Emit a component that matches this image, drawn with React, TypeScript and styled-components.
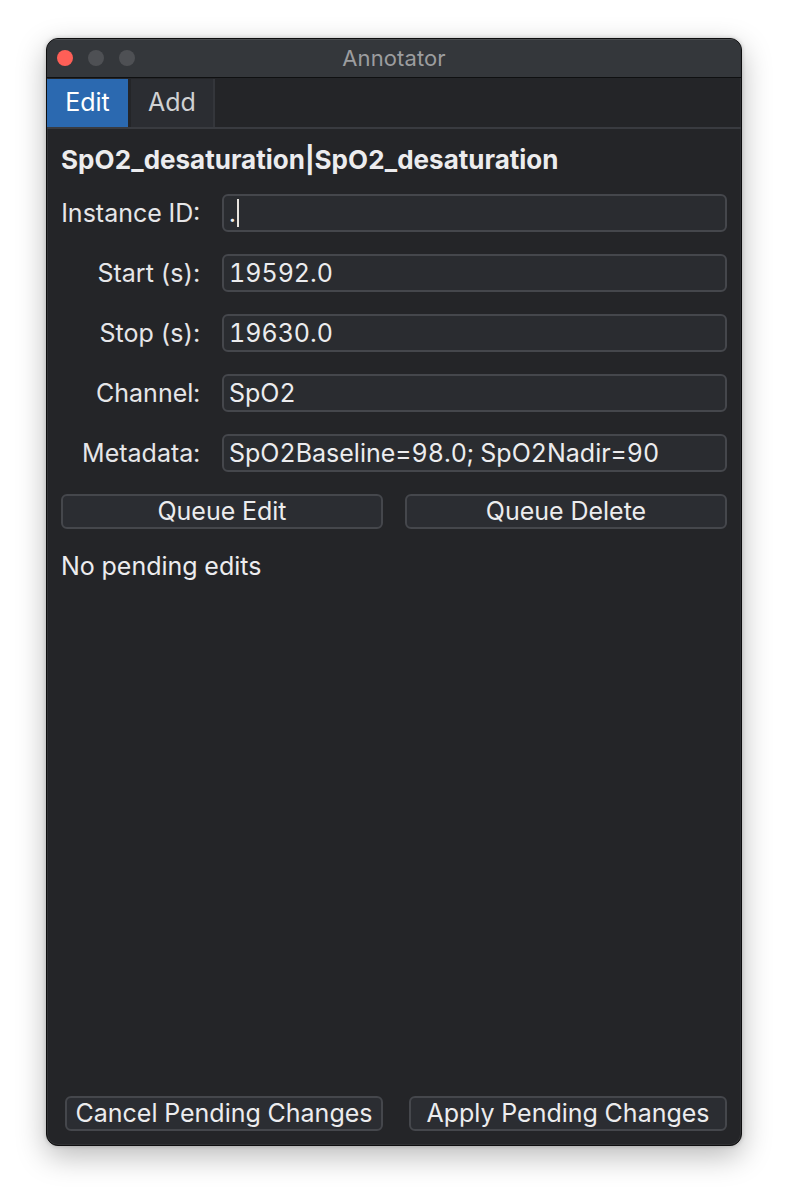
import React from "react";
import styled, { createGlobalStyle } from "styled-components";

const Global = createGlobalStyle`
  html, body { margin: 0; padding: 0; background: #ffffff; }
  body { font-family: Inter, "Noto Sans", "Liberation Sans", sans-serif; }
  * { box-sizing: border-box; }
`;

const Desk = styled.div`
  width: 788px;
  height: 1200px;
  padding: 38px 0 0 46px;
  background: #ffffff;
`;

const Window = styled.div`
  width: 696px;
  height: 1108px;
  border-radius: 12px;
  background: #242528;
  border: 1px solid #0e0e0f;
  box-shadow: 0 0 0 1px rgba(255,255,255,0.06) inset, 0 10px 30px rgba(0,0,0,0.28), 0 0 4px rgba(0,0,0,0.2);
  display: flex;
  flex-direction: column;
  overflow: hidden;
`;

const TitleBar = styled.div`
  position: relative;
  height: 39px;
  flex: none;
  background: #34373b;
  border-bottom: 1px solid #0f1011;
  box-shadow: inset 0 1px 0 rgba(255,255,255,0.12);
  display: flex;
  align-items: center;
  justify-content: center;
`;

const Lights = styled.div`
  position: absolute;
  left: 10px;
  top: 11px;
  display: flex;
  gap: 15px;
`;

const Light = styled.span<{ $c: string }>`
  width: 16px;
  height: 16px;
  border-radius: 50%;
  background: ${(p) => p.$c};
`;

const Title = styled.div`
  color: #9c9d9f;
  font-size: 22px;
  letter-spacing: 0.1px;
`;

const TabBar = styled.div`
  height: 51px;
  flex: none;
  display: flex;
  align-items: stretch;
  border-bottom: 2px solid #393b40;
  padding-top: 1px;
`;

const Tab = styled.div<{ $active?: boolean }>`
  width: ${(p) => (p.$active ? "81px" : "84px")};
  margin-left: ${(p) => (p.$active ? "0" : "3px")};
  background: ${(p) => (p.$active ? "#2b69b0" : "#2b2d32")};
  border-right: ${(p) => (p.$active ? "none" : "2px solid #34363b")};
  color: ${(p) => (p.$active ? "#ffffff" : "#d0d1d3")};
  font-size: 25px;
  display: flex;
  align-items: center;
  justify-content: center;
  padding-bottom: 2px;
`;

const Body = styled.div`
  flex: 1;
  display: flex;
  flex-direction: column;
  padding: 16px 14px 14px 14px;
  color: #e8e8ea;
  font-variant-numeric: tabular-nums;
`;

const Heading = styled.div`
  font-size: 26px;
  font-weight: 700;
  color: #ececee;
  height: 30px;
  line-height: 30px;
  margin-bottom: 19px;
`;

const Form = styled.div`
  display: grid;
  grid-template-columns: 139px 1fr;
  column-gap: 22px;
  row-gap: 22px;
  align-items: center;
`;

const Label = styled.div`
  text-align: right;
  font-size: 25px;
  color: #e6e6e8;
`;

const Field = styled.div`
  height: 38px;
  border: 2px solid #45474c;
  border-radius: 6px;
  background: #2a2c30;
  color: #ececee;
  font-size: 25px;
  padding: 0 5px;
  display: flex;
  align-items: center;
  position: relative;
`;

const Caret = styled.span`
  display: inline-block;
  width: 2px;
  height: 28px;
  background: #e8e4de;
  margin-left: 1px;
`;

const ButtonRow = styled.div<{ $gap: number; $inset: number }>`
  display: grid;
  grid-template-columns: 1fr 1fr;
  column-gap: ${(p) => p.$gap}px;
  padding-left: ${(p) => p.$inset}px;
`;

const Button = styled.div`
  height: 35px;
  border: 2px solid #45474c;
  border-radius: 6px;
  background: #2b2d32;
  color: #ececee;
  font-size: 25px;
  display: flex;
  align-items: center;
  justify-content: center;
  padding-bottom: 1px;
`;

const Status = styled.div`
  font-size: 25px;
  color: #ececee;
  margin-top: 22px;
`;

const Spacer = styled.div`
  flex: 1;
`;

const rows: [string, React.ReactNode][] = [
  ["Instance ID:", <>.<Caret /></>],
  ["Start (s):", "19592.0"],
  ["Stop (s):", "19630.0"],
  ["Channel:", "SpO2"],
  ["Metadata:", "SpO2Baseline=98.0; SpO2Nadir=90"],
];

export default function App() {
  return (
    <>
      <Global />
      <Desk>
        <Window>
          <TitleBar>
            <Lights>
              <Light $c="#fe5f57" />
              <Light $c="#4e5054" />
              <Light $c="#4e5054" />
            </Lights>
            <Title>Annotator</Title>
          </TitleBar>
          <TabBar>
            <Tab $active>Edit</Tab>
            <Tab>Add</Tab>
          </TabBar>
          <Body>
            <Heading>SpO2_desaturation|SpO2_desaturation</Heading>
            <Form>
              {rows.map(([l, v]) => (
                <React.Fragment key={l}>
                  <Label>{l}</Label>
                  <Field>{v}</Field>
                </React.Fragment>
              ))}
            </Form>
            <ButtonRow $gap={22} $inset={0} style={{ marginTop: 22 }}>
              <Button>Queue Edit</Button>
              <Button>Queue Delete</Button>
            </ButtonRow>
            <Status>No pending edits</Status>
            <Spacer />
            <ButtonRow $gap={26} $inset={4}>
              <Button>Cancel Pending Changes</Button>
              <Button>Apply Pending Changes</Button>
            </ButtonRow>
          </Body>
        </Window>
      </Desk>
    </>
  );
}
